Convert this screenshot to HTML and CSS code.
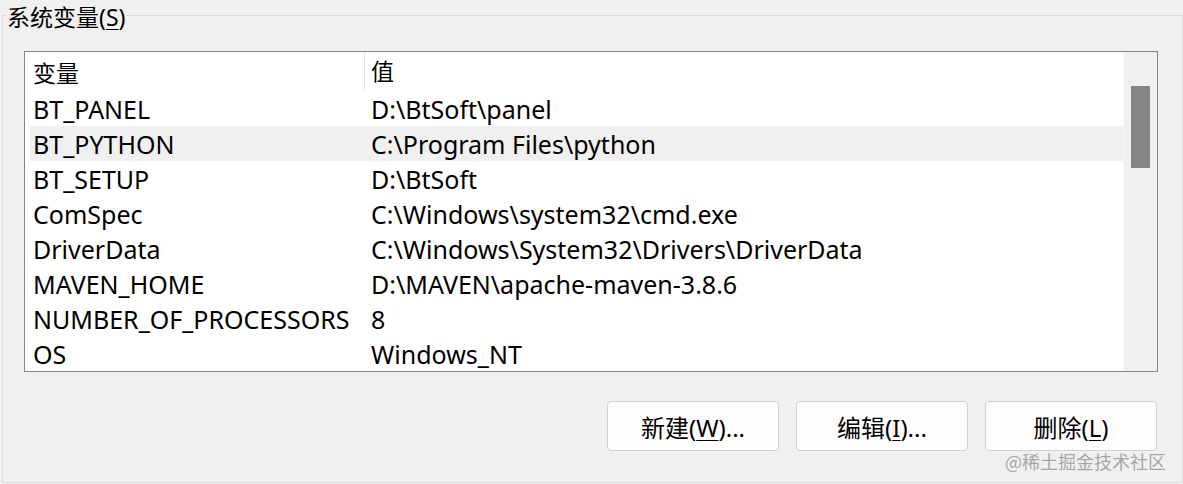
FILE: index.html
```html
<!DOCTYPE html>
<html lang="zh-CN">
<head>
    <meta charset="UTF-8">
    <title>系统变量</title>
    <link rel="stylesheet" href="styles.css">
</head>
<body>
    <fieldset class="group">
        <legend class="group-title">系统变量(<u>S</u>)</legend>

        <div class="group-body">
            <!-- Variable list -->
            <div class="list-box">
                <div class="list-table">
                    <div class="list-head">
                        <div class="col-name">变量</div>
                        <div class="col-value">值</div>
                    </div>
                    <div class="list-row"><div class="col-name">BT_PANEL</div><div class="col-value">D:\BtSoft\panel</div></div>
                    <div class="list-row hover"><div class="col-name">BT_PYTHON</div><div class="col-value">C:\Program Files\python</div></div>
                    <div class="list-row"><div class="col-name">BT_SETUP</div><div class="col-value">D:\BtSoft</div></div>
                    <div class="list-row"><div class="col-name">ComSpec</div><div class="col-value">C:\Windows\system32\cmd.exe</div></div>
                    <div class="list-row"><div class="col-name">DriverData</div><div class="col-value">C:\Windows\System32\Drivers\DriverData</div></div>
                    <div class="list-row"><div class="col-name">MAVEN_HOME</div><div class="col-value">D:\MAVEN\apache-maven-3.8.6</div></div>
                    <div class="list-row"><div class="col-name">NUMBER_OF_PROCESSORS</div><div class="col-value">8</div></div>
                    <div class="list-row"><div class="col-name">OS</div><div class="col-value">Windows_NT</div></div>
                </div>
                <div class="scrollbar">
                    <div class="scroll-thumb"></div>
                </div>
            </div>

            <!-- Action buttons -->
            <div class="actions">
                <button class="btn">新建(<u>W</u>)...</button>
                <button class="btn">编辑(<u>I</u>)...</button>
                <button class="btn">删除(<u>L</u>)</button>
            </div>
        </div>
    </fieldset>

    <div class="watermark">@稀土掘金技术社区</div>
</body>
</html>
```

FILE: styles.css
```css
/* Global styles */
body {
    margin: 0;
    background-color: #f0f0f0;
    font-family: "Noto Sans", "Noto Sans CJK SC", sans-serif;
    font-size: 25px;
    color: #000;
    width: 1183px;
    height: 484px;
    overflow: hidden;
    position: relative;
}

u {
    text-decoration-thickness: 1px;
    text-underline-offset: 3px;
}

/* Group box */
.group {
    margin: -1px 0 0 2px;
    padding: 0;
    width: 1181px;
    height: 484px;
    box-sizing: border-box;
    border: 1px solid #dcdcdc;
}

.group-title {
    margin-left: 3px;
    padding: 4px 1px 0;
    font-size: 23px;
    line-height: 28px;
}

.group-body {
    padding: 20px 24px 0 21px;
}

/* List box */
.list-box {
    display: flex;
    height: 319px;
    border: 1px solid #858585;
    background-color: #fff;
}

.list-table {
    flex: 1;
}

.list-head,
.list-row {
    display: flex;
    align-items: center;
}

.list-head {
    height: 39px;
    padding-left: 8px;
    font-size: 23px;
}

.list-head .col-value {
    border-left: 1px solid #e5e5e5;
    padding-left: 6px;
    height: 39px;
    line-height: 39px;
}

.list-row {
    height: 35px;
    margin-left: 5px;
    padding-left: 3px;
}

.list-row.hover {
    background-color: #f0f0f0;
}

.list-head .col-name {
    width: 331px;
}

.list-row .col-name {
    width: 338px;
}

.col-name,
.col-value {
    white-space: nowrap;
}

/* Scrollbar */
.scrollbar {
    width: 34px;
    background-color: #f0f0f0;
    border-left: 1px solid #f8f8f8;
    padding-top: 34px;
    box-sizing: border-box;
}

.scroll-thumb {
    width: 19px;
    height: 82px;
    margin-left: 7px;
    background-color: #858585;
}

/* Buttons */
.actions {
    display: flex;
    justify-content: flex-end;
    gap: 17px;
    margin-top: 29px;
    margin-right: 1px;
}

.btn {
    width: 172px;
    height: 50px;
    background-color: #fdfdfd;
    border: 1px solid #d0d0d0;
    border-radius: 4px;
    font-family: inherit;
    font-size: 24px;
    color: #000;
    padding: 0;
}

/* Watermark */
.watermark {
    position: absolute;
    left: 1005px;
    top: 448px;
    font-size: 18px;
    color: rgba(140, 140, 140, 0.75);
    font-family: "Noto Sans CJK SC", sans-serif;
}
```
